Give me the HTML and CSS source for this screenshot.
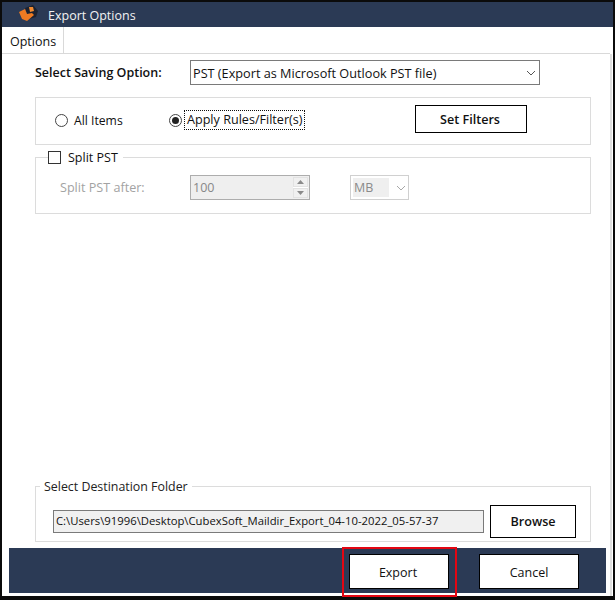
FILE: index.html
```html
<!DOCTYPE html>
<html lang="en">
<head>
<meta charset="utf-8">
<title>Export Options</title>
<link rel="stylesheet" href="styles.css">
</head>
<body>
<div class="window">
  <header class="titlebar">
    <svg class="logo" width="20" height="18" viewBox="0 0 20 18"><path d="M6 3 L14 0 L19 6 L17 12 L10 14 Z" fill="#1c2230"/><path d="M0 7 L6 4 L8 9 L13 8 L15 10 L8 16 L3 14 Z" fill="#ee7a22"/><path d="M10 2 L14 2 L15 6 L11 7 Z" fill="#f08a30"/></svg>
    <span class="title">Export Options</span>
  </header>
  <div class="tabstrip"><div class="tab">Options</div></div>
  <div class="content">
    <main class="pane">
      <div class="save-row">
        <label class="save-label">Select Saving Option:</label>
        <div class="select">
          <span>PST (Export as Microsoft Outlook PST file)</span>
          <svg class="chev" width="10" height="6" viewBox="0 0 10 6"><path d="M1 1 L5 5 L9 1" fill="none" stroke="#555" stroke-width="1"/></svg>
        </div>
      </div>
      <section class="box filter-box">
        <span class="radio-item first"><span class="radio"></span>All Items</span>
        <span class="radio-item second"><span class="radio on"></span><span class="focus">Apply Rules/Filter(s)</span></span>
        <button class="btn filters">Set Filters</button>
      </section>
      <fieldset class="box split">
        <legend class="split-legend"><span class="check"></span>Split PST</legend>
        <span class="after">Split PST after:</span>
        <div class="spin">
          <span>100</span>
          <span class="arrows">
            <span class="arrow"><svg width="7" height="4" viewBox="0 0 7 4"><path d="M3.5 0 L7 4 L0 4 Z" fill="#8a8a8a"/></svg></span>
            <span class="arrow"><svg width="7" height="4" viewBox="0 0 7 4"><path d="M0 0 L7 0 L3.5 4 Z" fill="#8a8a8a"/></svg></span>
          </span>
        </div>
        <div class="unit">
          <span class="unit-val">MB</span>
          <svg class="unit-chev" width="10" height="6" viewBox="0 0 10 6"><path d="M1 1 L5 5 L9 1" fill="none" stroke="#a8a8a8" stroke-width="1"/></svg>
        </div>
      </fieldset>
      <div class="spacer"></div>
      <fieldset class="box dest">
        <legend class="dest-legend">Select Destination Folder</legend>
        <div class="path">C:\Users\91996\Desktop\CubexSoft_Maildir_Export_04-10-2022_05-57-37</div>
        <button class="btn browse">Browse</button>
      </fieldset>
    </main>
    <footer class="footer">
      <button class="btn action export">Export</button>
      <button class="btn action cancel">Cancel</button>
    </footer>
  </div>
</div>
</body>
</html>
```
FILE: styles.css
```css
* { box-sizing: border-box; }
html, body { margin: 0; padding: 0; }
body { width: 615px; height: 600px; background: #fff; font-family: "Open Sans", "Noto Sans", sans-serif; font-size: 12.5px; color: #111; overflow: hidden; }
.window { width: 615px; height: 600px; display: flex; flex-direction: column; border-style: solid; border-color: #0b0b0b; border-width: 2px 2px 4px 2px; background: #fff; }
.titlebar { height: 25px; flex: none; background: #2b3a55; display: flex; align-items: center; padding: 1px 0 0 17px; color: #f2f2f2; }
.logo { flex: none; margin-top: -2px; }
.title { margin-left: 9px; font-size: 12.5px; }
.tabstrip { height: 27px; flex: none; display: flex; border-bottom: 1px solid #d9d9d9; margin-right: 3px; }
.tab { width: 62px; border-right: 1px solid #d9d9d9; padding: 6px 0 0 8px; font-size: 12.5px; }
.content { flex: 1; min-height: 0; display: flex; flex-direction: column; margin-right: 1px; border-right: 2px solid #e0e0e0; }
.pane { flex: 1; display: flex; flex-direction: column; padding: 0 19px 0 33px; }
.save-row { display: flex; align-items: center; height: 25px; margin-top: 6px; flex: none; }
.save-label { width: 155px; font-weight: 600; }
.select { width: 350px; height: 25px; border: 1px solid #7a7a7a; display: flex; align-items: center; justify-content: space-between; padding: 0 3px 0 2px; font-size: 12.7px; }
.box { border: 1px solid #dcdcdc; margin: 0; padding: 0; flex: none; min-width: 0; }
.filter-box { height: 48px; margin-top: 12px; display: flex; align-items: center; padding: 0 0 2px 19px; }
.radio-item { display: flex; align-items: center; }
.first { width: 114px; font-size: 12.2px; }
.second { width: 245px; font-size: 12.6px; }
.radio { width: 13px; height: 13px; border: 1px solid #444; border-radius: 50%; margin-right: 6px; display: flex; align-items: center; justify-content: center; background: #fff; }
.radio.on::after { content: ""; width: 7px; height: 7px; border-radius: 50%; background: #222; }
.focus { outline: 1px dotted #111; padding: 0 1px 1px 2px; margin-left: -3px; }
.btn { font-family: inherit; background: #fff; border: 1px solid #000; color: #111; padding: 0; font-size: 12.6px; }
.filters { width: 112px; height: 28px; font-weight: 600; margin: -2px 0 0 1px; padding-right: 2px; }
.split { height: 65px; margin-top: 4px; padding: 0 0 0 24px; display: flex; align-items: flex-start; }
.split-legend { margin-left: -12px; padding: 0 5px 0 0; display: flex; align-items: center; height: 17px; line-height: 17px; }
.check { width: 13px; height: 13px; border: 1px solid #333; margin-right: 7px; }
.after { width: 130px; margin-top: 13px; color: #a3a3a3; font-size: 12.6px; }
.spin { width: 120px; height: 25px; margin-top: 9px; border: 1px solid #adadad; background: #efefef; color: #888; display: flex; align-items: center; justify-content: space-between; padding: 0 0 0 2px; }
.arrows { width: 15px; height: 21px; display: flex; flex-direction: column; gap: 1px; background: #fff; margin-right: 1px; }
.arrow { flex: 1; background: #f0f0f0; display: flex; align-items: center; justify-content: center; border: 1px solid #e2e2e2; }
.unit { width: 59px; height: 25px; margin: 9px 0 0 40px; border: 1px solid #d0d0d0; display: flex; align-items: center; padding: 2px; color: #8a8a8a; }
.unit-val { width: 36px; height: 19px; background: #efefef; padding-left: 1px; line-height: 19px; }
.unit-chev { margin-left: 7px; }
.spacer { flex: 1; }
.dest { height: 64px; display: flex; align-items: flex-start; padding: 0 14px 0 17px; }
.dest-legend { margin-left: -13px; padding: 0 4px; font-size: 12.4px; color: #222; line-height: 17px; height: 17px; }
.path { width: 431px; height: 23px; margin-top: 15px; border: 1px solid #7a7a7a; background: #f0f0f0; line-height: 20px; padding-left: 2px; font-size: 11.3px; white-space: nowrap; overflow: hidden; }
.browse { width: 86px; height: 33px; margin: 10px 0 0 6px; font-weight: 600; }
.footer { height: 45px; flex: none; margin: 6px 4px 3px 7px; background: #2b3a55; display: flex; justify-content: flex-end; align-items: center; padding: 2px 27px 0 0; gap: 30px; }
.action { width: 100px; height: 35px; font-size: 12.5px; padding-top: 2px; }
.export { position: relative; padding-right: 2px; }
.export::after { content: ""; position: absolute; left: -8px; right: -9px; top: -8px; bottom: -9px; border: 2px solid #e30613; }
```
